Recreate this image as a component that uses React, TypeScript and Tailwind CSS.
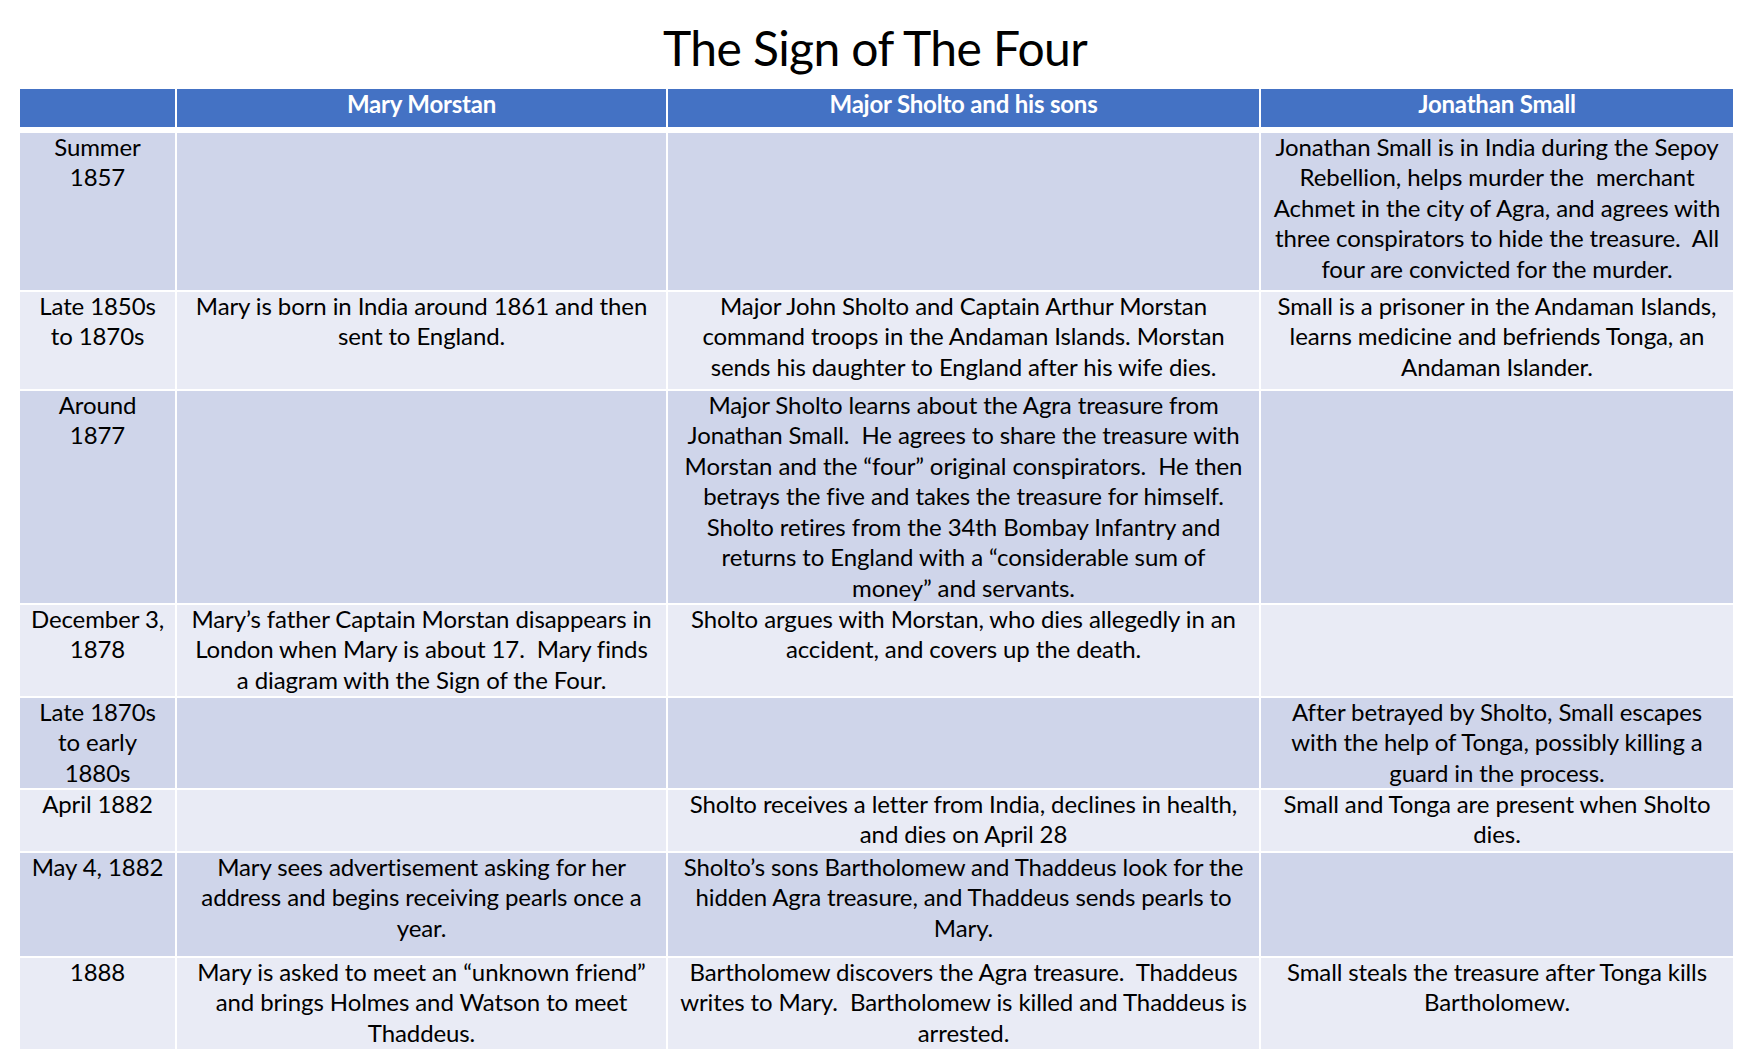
import React from "react";

type Row = { h: number; date: string[]; c1: string[]; c2: string[]; c3: string[]; odd: boolean };

const rows: Row[] = [
  {
    h: 157,
    odd: true,
    date: ["Summer", "1857"],
    c1: [],
    c2: [],
    c3: [
      "Jonathan Small is in India during the Sepoy",
      "Rebellion, helps murder the  merchant",
      "Achmet in the city of Agra, and agrees with",
      "three conspirators to hide the treasure.  All",
      "four are convicted for the murder.",
    ],
  },
  {
    h: 97,
    odd: false,
    date: ["Late 1850s", "to 1870s"],
    c1: ["Mary is born in India around 1861 and then", "sent to England."],
    c2: [
      "Major John Sholto and Captain Arthur Morstan",
      "command troops in the Andaman Islands. Morstan",
      "sends his daughter to England after his wife dies.",
    ],
    c3: ["Small is a prisoner in the Andaman Islands,", "learns medicine and befriends Tonga, an", "Andaman Islander."],
  },
  {
    h: 212,
    odd: true,
    date: ["Around", "1877"],
    c1: [],
    c2: [
      "Major Sholto learns about the Agra treasure from",
      "Jonathan Small.  He agrees to share the treasure with",
      "Morstan and the \u201cfour\u201d original conspirators.  He then",
      "betrays the five and takes the treasure for himself.",
      "Sholto retires from the 34th Bombay Infantry and",
      "returns to England with a \u201cconsiderable sum of",
      "money\u201d and servants.",
    ],
    c3: [],
  },
  {
    h: 91,
    odd: false,
    date: ["December 3,", "1878"],
    c1: [
      "Mary\u2019s father Captain Morstan disappears in",
      "London when Mary is about 17.  Mary finds",
      "a diagram with the Sign of the Four.",
    ],
    c2: ["Sholto argues with Morstan, who dies allegedly in an", "accident, and covers up the death."],
    c3: [],
  },
  {
    h: 90,
    odd: true,
    date: ["Late 1870s", "to early", "1880s"],
    c1: [],
    c2: [],
    c3: ["After betrayed by Sholto, Small escapes", "with the help of Tonga, possibly killing a", "guard in the process."],
  },
  {
    h: 61,
    odd: false,
    date: ["April 1882"],
    c1: [],
    c2: ["Sholto receives a letter from India, declines in health,", "and dies on April 28"],
    c3: ["Small and Tonga are present when Sholto", "dies."],
  },
  {
    h: 103,
    odd: true,
    date: ["May 4, 1882"],
    c1: ["Mary sees advertisement asking for her", "address and begins receiving pearls once a", "year."],
    c2: [
      "Sholto\u2019s sons Bartholomew and Thaddeus look for the",
      "hidden Agra treasure, and Thaddeus sends pearls to",
      "Mary.",
    ],
    c3: [],
  },
  {
    h: 91,
    odd: false,
    date: ["1888"],
    c1: ["Mary is asked to meet an \u201cunknown friend\u201d", "and brings Holmes and Watson to meet", "Thaddeus."],
    c2: [
      "Bartholomew discovers the Agra treasure.  Thaddeus",
      "writes to Mary.  Bartholomew is killed and Thaddeus is",
      "arrested.",
    ],
    c3: ["Small steals the treasure after Tonga kills", "Bartholomew."],
  },
];

function Cell({ lines, odd, h }: { lines: string[]; odd: boolean; h: number }) {
  return (
    <div className={`${odd ? "bg-[#cfd5ea]" : "bg-[#e9ebf5]"} flex flex-col items-center`} style={{ height: h }}>
      {lines.map((l, i) => (
        <div
          key={i}
          className="whitespace-pre text-center leading-[30.5px] text-[24px] tracking-[-0.1px] text-black first:mt-[-1.5px]"
        >
          {l}
        </div>
      ))}
    </div>
  );
}

export default function App() {
  return (
    <div className="w-[1760px] h-[1063px] bg-white font-['Lato','Open_Sans',sans-serif] overflow-hidden">
      <div className="h-[89px] flex items-start justify-center pt-[18px] pr-[10px]">
        <h1 className="text-[48px] leading-[60px] text-black tracking-[-0.6px]">The Sign of The Four</h1>
      </div>
      <div className="ml-[20px] w-[1713px]">
        <div className="grid grid-cols-[155px_489px_591px_472px] gap-x-[2px]">
          <div className="bg-[#4472c4] h-[38px]" />
          <div className="bg-[#4472c4] h-[38px] flex items-center justify-center pb-[9px] text-white font-bold text-[24px] tracking-[-0.2px]">
            Mary Morstan
          </div>
          <div className="bg-[#4472c4] h-[38px] flex items-center justify-center pb-[9px] text-white font-bold text-[24px] tracking-[-0.2px]">
            Major Sholto and his sons
          </div>
          <div className="bg-[#4472c4] h-[38px] flex items-center justify-center pb-[9px] text-white font-bold text-[24px] tracking-[-0.2px]">
            Jonathan Small
          </div>
        </div>
        <div className="mt-[6px] grid grid-cols-[155px_489px_591px_472px] gap-[2px]">
          {rows.map((r, i) => (
            <React.Fragment key={i}>
              <Cell lines={r.date} odd={r.odd} h={r.h} />
              <Cell lines={r.c1} odd={r.odd} h={r.h} />
              <Cell lines={r.c2} odd={r.odd} h={r.h} />
              <Cell lines={r.c3} odd={r.odd} h={r.h} />
            </React.Fragment>
          ))}
        </div>
      </div>
    </div>
  );
}
